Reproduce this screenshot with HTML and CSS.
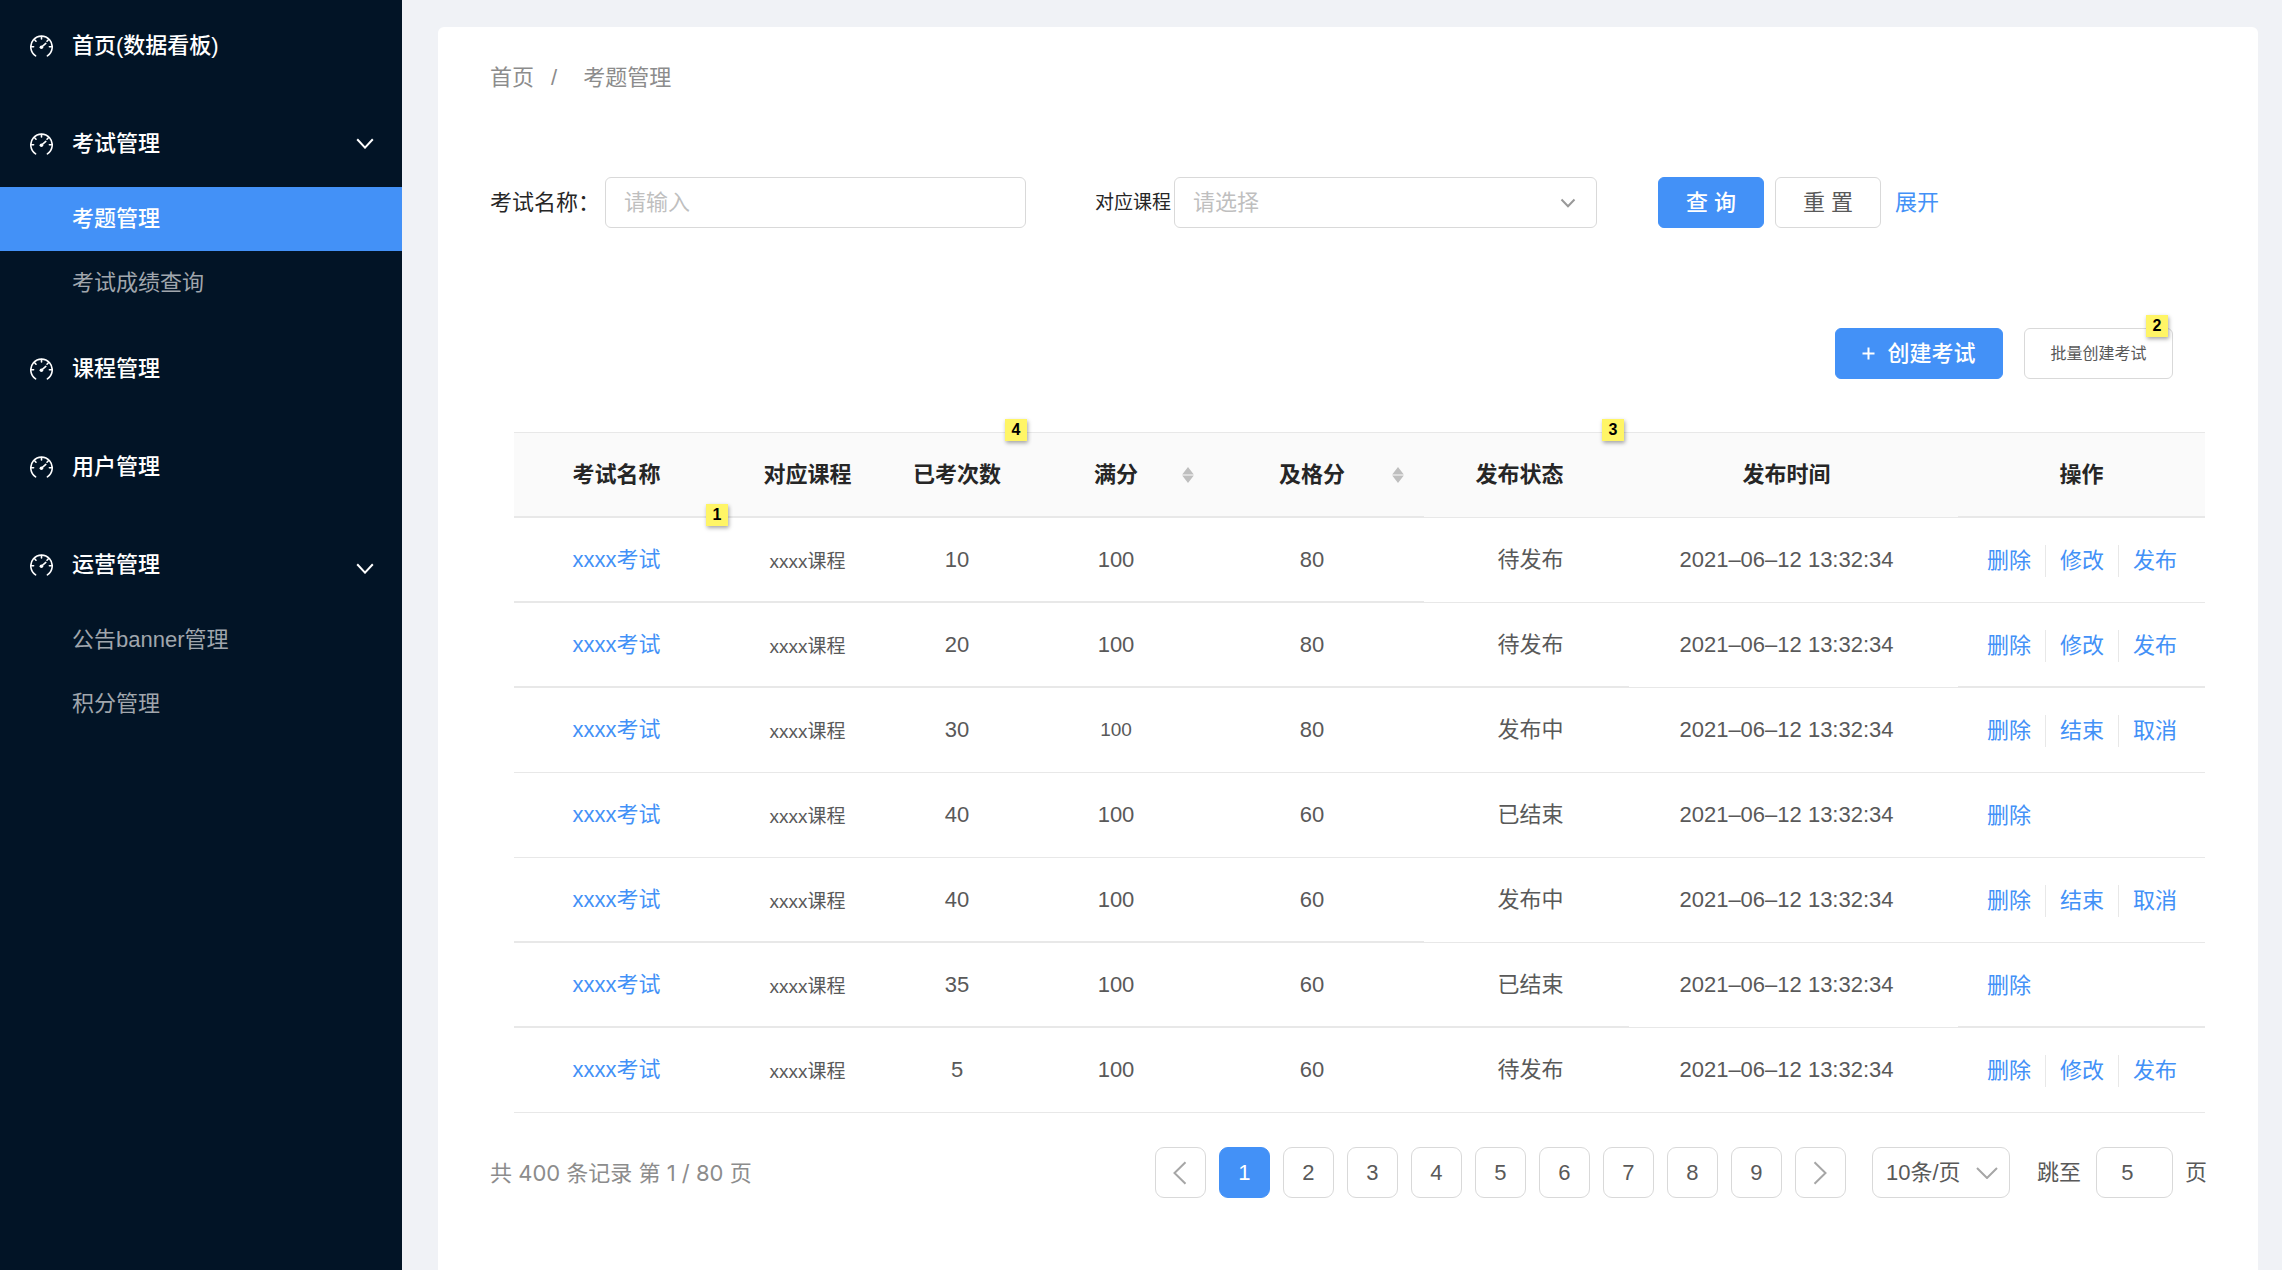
FILE: index.html
```html
<!DOCTYPE html>
<html lang="zh-CN">
<head>
<meta charset="utf-8">
<meta name="viewport" content="width=device-width, initial-scale=1">
<title>考题管理</title>
<link rel="stylesheet" href="styles.css">
</head>
<body>
<svg class="sprite" aria-hidden="true">
  <symbol id="gauge" viewBox="0 0 23 22">
    <g fill="none" stroke="currentColor" stroke-width="1.6" stroke-linecap="round">
      <path d="M5.6 20.8A10.7 10.7 0 1 1 17.4 20.8"/>
      <path d="M11.5 1.6v2.4M4.6 4.8l1.4 1.4M18.4 4.8l-1.4 1.4M1.4 11.8h2.2M21.6 11.8h-2.2"/>
      <path d="M11.8 11.8l4-3.4"/>
    </g>
    <circle cx="11.4" cy="12.2" r="1.8" fill="currentColor"/>
  </symbol>
  <symbol id="sort" viewBox="0 0 12 16">
    <path d="M6 0l5.8 7.4H.2zM6 16l5.8-7.4H.2z" fill="currentColor"/>
  </symbol>
</svg>

<div class="layout">
  <nav class="sidebar" aria-label="主导航">
    <a class="menu" href="#"><svg class="gauge"><use href="#gauge"/></svg>首页(数据看板)</a>
    <div class="group">
      <a class="menu" href="#"><svg class="gauge"><use href="#gauge"/></svg>考试管理
        <svg class="arrow" viewBox="0 0 18 11"><path d="M1.2 1.2L9 9.6l7.8-8.4"/></svg></a>
      <a class="submenu active" href="#">考题管理</a>
      <a class="submenu" href="#">考试成绩查询</a>
    </div>
    <a class="menu" href="#"><svg class="gauge"><use href="#gauge"/></svg>课程管理</a>
    <a class="menu" href="#"><svg class="gauge"><use href="#gauge"/></svg>用户管理</a>
    <div class="group">
      <a class="menu" href="#"><svg class="gauge"><use href="#gauge"/></svg>运营管理
        <svg class="arrow low" viewBox="0 0 18 11"><path d="M1.2 1.2L9 9.6l7.8-8.4"/></svg></a>
      <a class="submenu" href="#">公告banner管理</a>
      <a class="submenu" href="#">积分管理</a>
    </div>
  </nav>

  <main class="main">
    <div class="card">
      <div class="breadcrumb"><a href="#">首页</a><span>/</span><span class="current">考题管理</span></div>

      <form class="filter">
        <div class="field">
          <label for="name">考试名称：</label>
          <input id="name" class="control" type="text" placeholder="请输入">
        </div>
        <div class="field tight">
          <label for="course">对应课程</label>
          <div class="select">
            <select id="course" class="control"><option>请选择</option></select>
            <svg class="caret" viewBox="0 0 16 10"><path d="M1.5 1.5L8 8.2l6.5-6.7"/></svg>
          </div>
        </div>
        <div class="buttons">
          <button class="btn primary" type="button">查 询</button>
          <button class="btn" type="button">重 置</button>
          <a href="#">展开</a>
        </div>
      </form>

      <div class="toolbar">
        <button class="btn primary create" type="button"><svg viewBox="0 0 13 13"><path d="M6.5 .5v12M.5 6.5h12"/></svg>创建考试</button>
        <div class="marked">
          <button class="btn batch" type="button">批量创建考试</button>
          <span class="note above-btn">2</span>
        </div>
      </div>

      <table class="exams">
        <colgroup><col class="c-name"><col class="c-course"><col class="c-count"><col class="c-full"><col class="c-pass"><col class="c-status"><col class="c-time"><col class="c-ops"></colgroup>
        <thead>
          <tr class="heavy head">
            <th>考试名称<span class="note bottom">1</span></th>
            <th>对应课程</th>
            <th>已考次数<span class="note top">4</span></th>
            <th><div class="sortable"><span>满分</span><svg><use href="#sort"/></svg></div></th>
            <th><div class="sortable"><span>及格分</span><svg><use href="#sort"/></svg></div></th>
            <th>发布状态<span class="note top">3</span></th>
            <th>发布时间</th>
            <th>操作</th>
          </tr>
        </thead>
        <tbody>
          <tr class="heavy"><td><a href="#">xxxx考试</a></td><td>xxxx课程</td><td>10</td><td>100</td><td>80</td><td>待发布</td><td>2021–06–12 13:32:34</td><td><div class="ops"><a href="#">删除</a><a href="#">修改</a><a href="#">发布</a></div></td></tr>
          <tr class="heavy wide"><td><a href="#">xxxx考试</a></td><td>xxxx课程</td><td>20</td><td>100</td><td>80</td><td>待发布</td><td>2021–06–12 13:32:34</td><td><div class="ops"><a href="#">删除</a><a href="#">修改</a><a href="#">发布</a></div></td></tr>
          <tr><td><a href="#">xxxx考试</a></td><td>xxxx课程</td><td>30</td><td class="small">100</td><td>80</td><td>发布中</td><td>2021–06–12 13:32:34</td><td><div class="ops"><a href="#">删除</a><a href="#">结束</a><a href="#">取消</a></div></td></tr>
          <tr><td><a href="#">xxxx考试</a></td><td>xxxx课程</td><td>40</td><td>100</td><td>60</td><td>已结束</td><td>2021–06–12 13:32:34</td><td><div class="ops"><a href="#">删除</a></div></td></tr>
          <tr class="heavy"><td><a href="#">xxxx考试</a></td><td>xxxx课程</td><td>40</td><td>100</td><td>60</td><td>发布中</td><td>2021–06–12 13:32:34</td><td><div class="ops"><a href="#">删除</a><a href="#">结束</a><a href="#">取消</a></div></td></tr>
          <tr class="heavy wide"><td><a href="#">xxxx考试</a></td><td>xxxx课程</td><td>35</td><td>100</td><td>60</td><td>已结束</td><td>2021–06–12 13:32:34</td><td><div class="ops"><a href="#">删除</a></div></td></tr>
          <tr><td><a href="#">xxxx考试</a></td><td>xxxx课程</td><td>5</td><td>100</td><td>60</td><td>待发布</td><td>2021–06–12 13:32:34</td><td><div class="ops"><a href="#">删除</a><a href="#">修改</a><a href="#">发布</a></div></td></tr>
        </tbody>
      </table>

      <div class="pagination">
        <span class="total">共 400 条记录 第 1 / 80 页</span>
        <div class="pages">
          <button class="page" type="button" aria-label="上一页"><svg viewBox="0 0 14 24"><path d="M12.5 1.2L1.5 12l11 10.8"/></svg></button>
          <button class="page current" type="button">1</button>
          <button class="page" type="button">2</button>
          <button class="page" type="button">3</button>
          <button class="page" type="button">4</button>
          <button class="page" type="button">5</button>
          <button class="page" type="button">6</button>
          <button class="page" type="button">7</button>
          <button class="page" type="button">8</button>
          <button class="page" type="button">9</button>
          <button class="page" type="button" aria-label="下一页"><svg viewBox="0 0 14 24"><path d="M1.5 1.2l11 10.8-11 10.8"/></svg></button>
        </div>
        <div class="select size">
          <select aria-label="每页条数"><option>10条/页</option></select>
          <svg class="caret" viewBox="0 0 22 12"><path d="M1 1l10 10L21 1"/></svg>
        </div>
        <div class="jump">
          <label for="jump">跳至</label>
          <input id="jump" type="text" value="5">
          <span>页</span>
        </div>
      </div>
    </div>
  </main>
</div>
</body>
</html>
```

FILE: styles.css
```css
:root {
  --blue: #4391f7;
  --navy: #021426;
  --border: #d9d9d9;
  --line: #e8e8e8;
  --text: #595959;
  --title: #262626;
  --muted: #8c8c8c;
  --hint: #bfbfbf;
}

* { box-sizing: border-box; }

body {
  margin: 0;
  background: #f0f2f6;
  color: var(--text);
  font: 22px/32px "Liberation Sans", "Noto Sans CJK SC", sans-serif;
}

a { color: var(--blue); text-decoration: none; }
button, input, select { font: inherit; color: inherit; }
svg { display: block; flex: none; }
svg path { vector-effect: non-scaling-stroke; }
.sprite { position: absolute; width: 0; height: 0; }

.layout { display: flex; min-height: 100vh; }

/* Sidebar */
.sidebar {
  flex: none;
  display: flex;
  flex-direction: column;
  gap: 10px;
  width: 402px;
  padding-top: 2px;
  background: var(--navy);
}
.menu {
  display: flex;
  align-items: center;
  height: 88px;
  padding: 0 28px 0 30px;
  color: #fff;
  font-weight: 500;
}
.group .menu { height: 87px; }
.gauge { width: 23px; height: 22px; margin-right: 19px; }
.arrow {
  width: 18px;
  height: 11px;
  margin-left: auto;
  fill: none;
  stroke: #fff;
  stroke-width: 2;
}
.arrow.low { margin-top: 8px; }
.submenu {
  display: flex;
  align-items: center;
  height: 64px;
  padding-left: 72px;
  color: #a0a6ad;
}
.submenu.active { background: var(--blue); color: #fff; font-weight: 500; }

/* Content card */
.main { flex: 1; display: flex; min-width: 0; padding: 27px 24px 0 36px; }
.card {
  flex: 1;
  min-width: 0;
  padding: 33px 53px 48px 52px;
  background: #fff;
  border-radius: 6px 6px 0 0;
}
.breadcrumb { display: flex; line-height: 36px; color: var(--muted); }
.breadcrumb a { color: inherit; margin-right: 17px; }
.breadcrumb .current { margin-left: 26px; }

/* Filter */
.filter {
  display: grid;
  grid-template-columns: 605fr 563fr auto;
  align-items: center;
  margin: 81px 266px 0 0;
}
.field { display: flex; align-items: center; margin-right: 69px; color: var(--title); }
.field label { flex: none; width: 115px; white-space: nowrap; }
.field.tight { margin-right: 61px; }
.field.tight label { width: 79px; font-size: 19px; }
.control {
  width: 100%;
  min-width: 0;
  height: 51px;
  padding: 0 18px;
  border: 1px solid var(--border);
  border-radius: 6px;
  background: #fff;
  outline: none;
}
.control::placeholder { color: var(--hint); opacity: 1; }
select.control { color: var(--hint); }
.select { display: grid; flex: 1; align-items: center; }
.select > * { grid-area: 1 / 1; }
.select select { appearance: none; }
.caret { justify-self: end; pointer-events: none; fill: none; }
.field .caret { width: 16px; height: 10px; margin-right: 21px; stroke: #999; stroke-width: 2; }

.btn {
  height: 51px;
  padding: 0 24px;
  border: 1px solid var(--border);
  border-radius: 6px;
  background: #fff;
  white-space: nowrap;
}
.btn.primary { border-color: var(--blue); background: var(--blue); color: #fff; font-weight: 500; }
.buttons { display: flex; align-items: center; gap: 11px; }
.buttons .btn { width: 106px; }
.buttons a { margin-left: 3px; }

.toolbar { display: flex; justify-content: flex-end; gap: 21px; margin: 100px 32px 53px 0; }
.create { display: flex; align-items: center; justify-content: center; gap: 12px; width: 168px; }
.create svg { width: 13px; height: 13px; stroke: #fff; stroke-width: 2; }
.marked { position: relative; }
.batch { width: 149px; font-size: 16px; }

/* Numbered sticky notes */
.note {
  position: absolute;
  width: 22px;
  height: 22px;
  background: #fff566;
  box-shadow: 1px 2px 4px rgba(0, 0, 0, .35);
  color: #000;
  font: bold 16px/22px "Liberation Sans", sans-serif;
  text-align: center;
}
.note.above-btn { right: 5px; top: -13px; }
.note.top { right: 5px; top: -14px; }
.note.bottom { right: 5px; bottom: -10px; }

/* Table */
.exams {
  width: calc(100% - 24px);
  margin-left: 24px;
  table-layout: fixed;
  border-spacing: 0;
}
.c-name { width: 219px; }
.c-course { width: 163px; }
.c-count { width: 136px; }
.c-full { width: 182px; }
.c-pass { width: 210px; }
.c-status { width: 205px; }
.c-time { width: 329px; }
.c-ops { width: 247px; }

.exams th, .exams td {
  height: 85px;
  padding: 0 14px 0 0;
  border-bottom: 1px solid var(--line);
  text-align: center;
  white-space: nowrap;
}
.exams th {
  position: relative;
  height: 86px;
  border-top: 1px solid var(--line);
  background: #fafafa;
  color: var(--title);
  font-weight: 600;
}
.exams th:last-child { padding-right: 0; }
.heavy > :nth-child(-n+5), .wide > :nth-child(6), .wide > :last-child, .head > :last-child { border-bottom-width: 2px; }
.exams td:nth-child(2), .exams td.small { font-size: 19px; }
.exams td:nth-child(2) { padding-top: 4px; }
.exams td:nth-child(6) { padding: 0 0 0 8px; }
.exams td:last-child { padding: 2px 0 0 15px; }

.sortable { display: grid; grid-template-columns: 1fr auto 1fr; align-items: center; }
.sortable span { grid-column: 2; }
.sortable svg { justify-self: end; width: 12px; height: 16px; margin-right: 6px; color: var(--hint); }

.ops { display: flex; }
.ops a { padding: 0 14px; }
.ops a + a { border-left: 1px solid var(--line); }

/* Pagination */
.pagination { display: flex; align-items: center; margin: 34px -2px 0 0; }
.total { margin-right: auto; color: var(--muted); font-family: Inter, "Noto Sans CJK SC", sans-serif; }
.pages { display: flex; gap: 13px; }
.page {
  display: flex;
  align-items: center;
  justify-content: center;
  width: 51px;
  height: 51px;
  padding: 0;
  border: 1px solid var(--border);
  border-radius: 9px;
  background: #fff;
}
.page.current { border-color: var(--blue); background: var(--blue); color: #fff; }
.page svg { width: 14px; height: 24px; fill: none; stroke: #a6a6a6; stroke-width: 2; }
.size { flex: none; width: 138px; margin: 0 27px 0 26px; }
.size select, .jump input {
  width: 100%;
  height: 51px;
  padding: 0 13px;
  border: 1px solid var(--border);
  border-radius: 9px;
  background: #fff;
  outline: none;
}
.size .caret { width: 22px; height: 12px; margin-right: 12px; stroke: #a6a6a6; stroke-width: 2; }
.jump { display: flex; align-items: center; }
.jump input { width: 77px; margin: 0 12px 0 15px; padding: 0 14px 0 0; text-align: center; }
```
